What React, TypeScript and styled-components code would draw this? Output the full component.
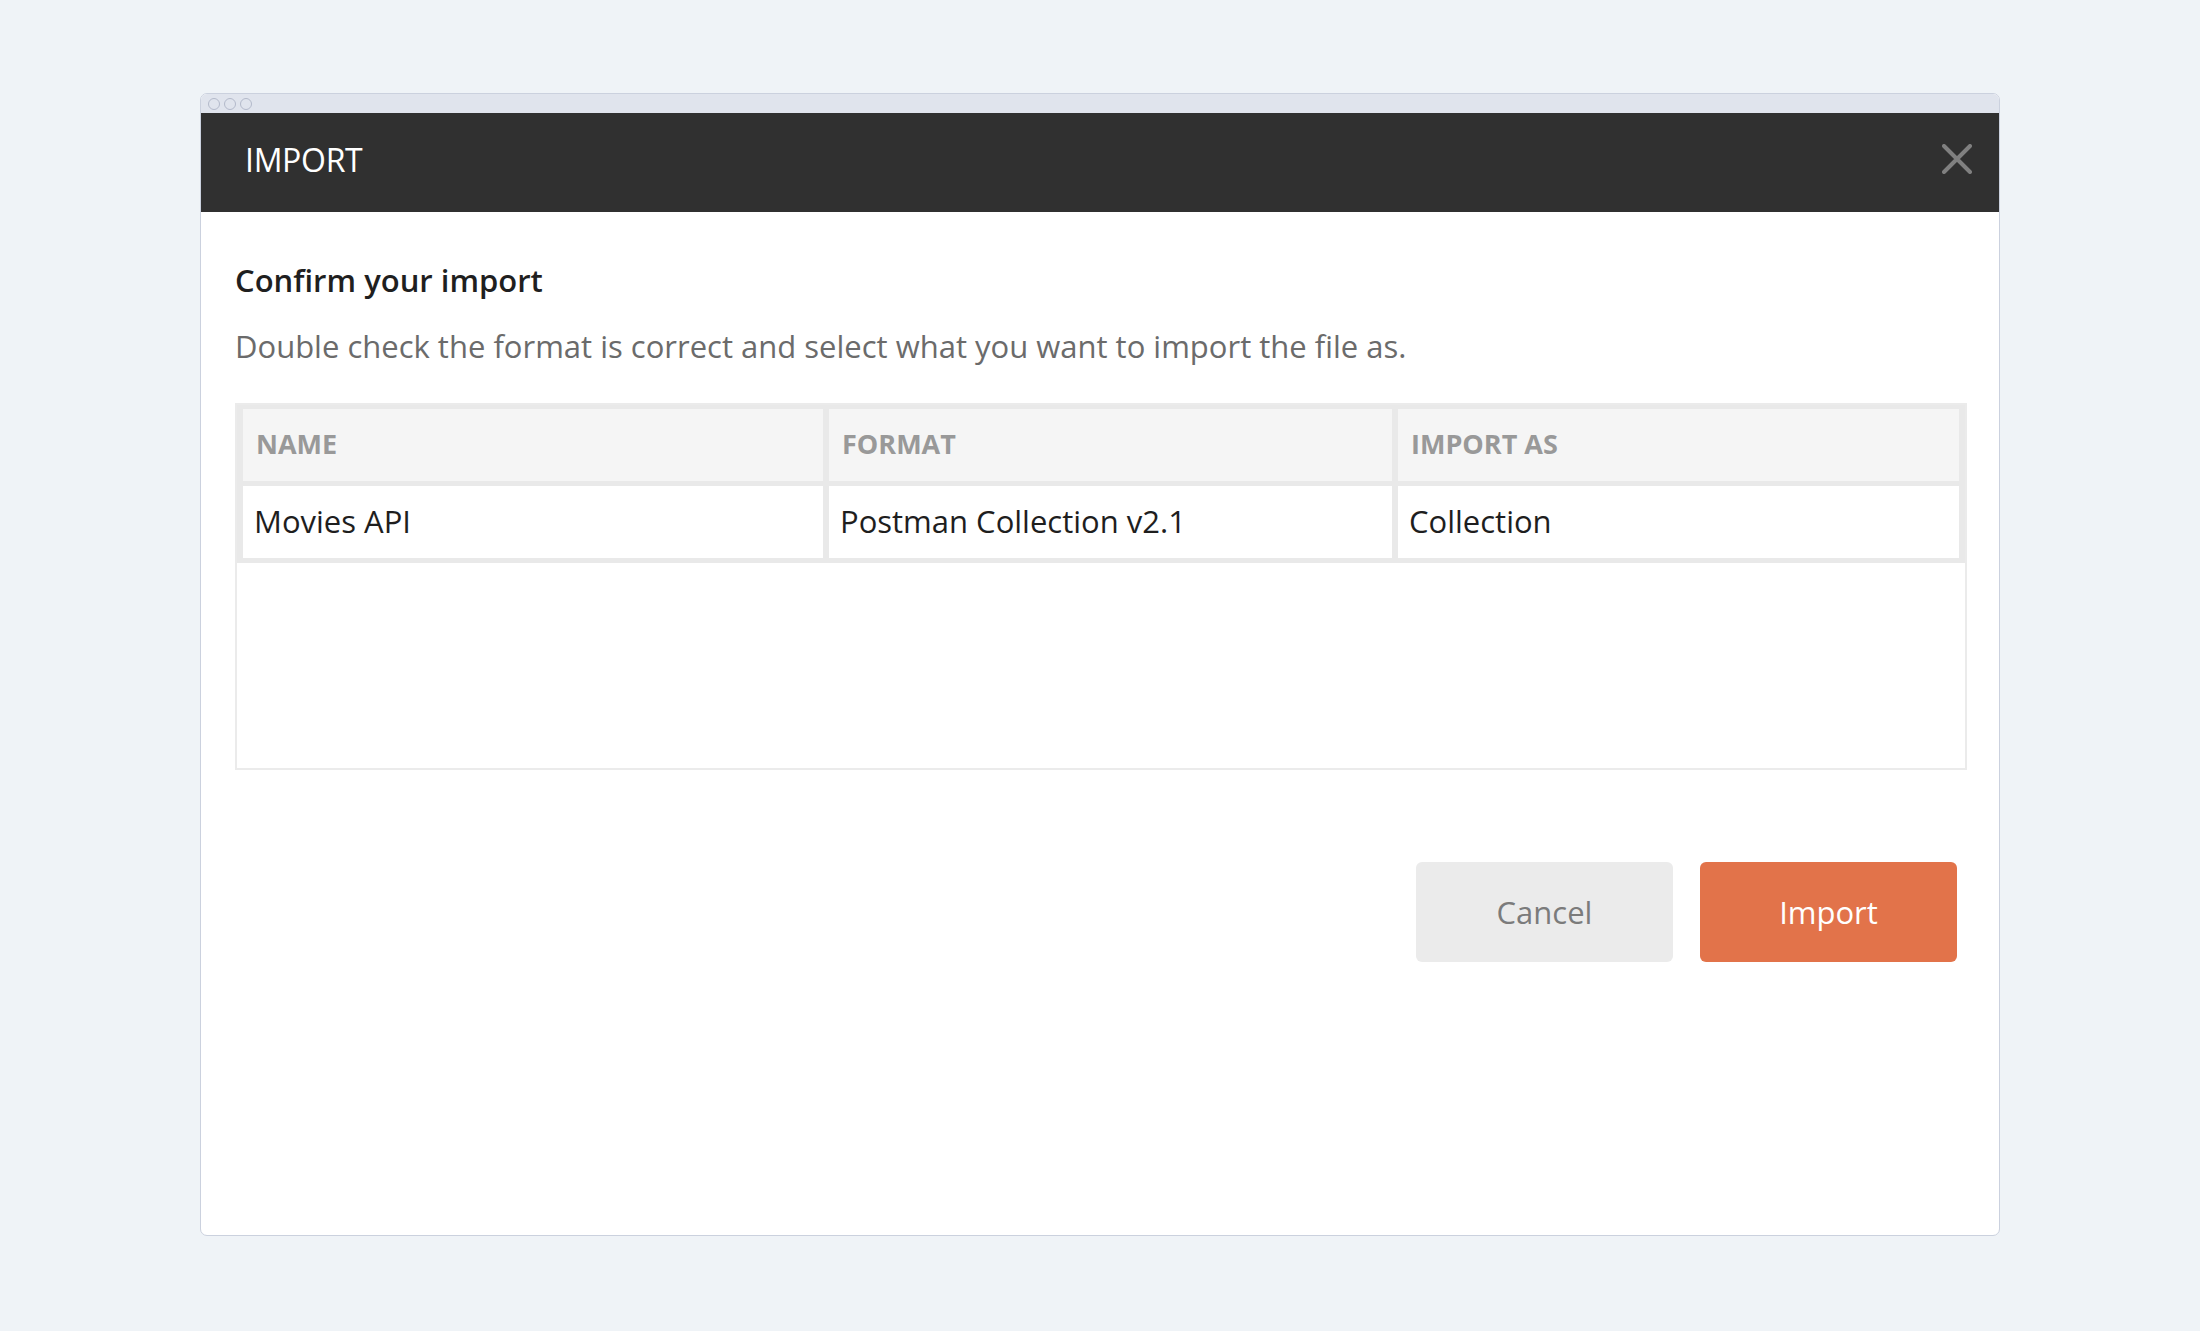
import React from "react";
import styled, { createGlobalStyle } from "styled-components";

const Global = createGlobalStyle`
  html, body { margin: 0; padding: 0; background: #eff3f7; }
  body { font-family: "Open Sans", "Noto Sans", sans-serif; }
`;

const Page = styled.div`
  width: 2200px;
  height: 1331px;
  box-sizing: border-box;
  padding: 93px 0 0 200px;
`;

const Frame = styled.div`
  width: 1800px;
  height: 1143px;
  box-sizing: border-box;
  border: 1px solid #cbd1de;
  border-radius: 7px;
  overflow: hidden;
  background: #ffffff;
  display: flex;
  flex-direction: column;
`;

const TitleBar = styled.div`
  height: 19px;
  flex: none;
  background: #e0e4ed;
  display: flex;
  align-items: center;
  gap: 4px;
  padding-left: 7px;
`;

const Dot = styled.span`
  width: 10px;
  height: 10px;
  border-radius: 50%;
  border: 1px solid #b3b9ca;
`;

const Header = styled.div`
  height: 99px;
  flex: none;
  background: #303030;
  display: flex;
  align-items: center;
  justify-content: space-between;
  padding: 0 27px 7px 44px;
  box-sizing: border-box;
`;

const Title = styled.div`
  color: #ffffff;
  font-size: 32px;
  font-weight: 400;
  letter-spacing: -0.3px;
`;

const CloseBtn = styled.button`
  width: 30px;
  height: 30px;
  padding: 0;
  border: none;
  background: transparent;
  display: flex;
  cursor: pointer;
`;

const Body = styled.div`
  flex: 1;
  padding: 48px 32px 0 34px;
  display: flex;
  flex-direction: column;
`;

const Heading = styled.h2`
  margin: 0;
  font-size: 31px;
  line-height: 40px;
  font-weight: 600;
  color: #1f1f1f;
`;

const Description = styled.p`
  margin: 26px 0 0 0;
  font-size: 31px;
  line-height: 40px;
  color: #6b6b6b;
`;

const TableBox = styled.div`
  margin-top: 37px;
  border: 2px solid #ebebeb;
  height: 367px;
  box-sizing: border-box;
  display: flex;
  flex-direction: column;
`;

const Grid = styled.div`
  display: grid;
  grid-template-columns: 580fr 563fr 561fr;
  grid-auto-rows: 72px;
  column-gap: 6px;
  row-gap: 5px;
  padding: 4px 6px 5px 6px;
  background: #e9e9e9;
`;

const Cell = styled.div<{ $head?: boolean }>`
  background: ${(p) => (p.$head ? "#f5f5f5" : "#ffffff")};
  color: ${(p) => (p.$head ? "#999999" : "#1e1e1e")};
  font-size: ${(p) => (p.$head ? "27px" : "31px")};
  font-weight: ${(p) => (p.$head ? 700 : 400)};
  display: flex;
  align-items: center;
  padding-left: ${(p) => (p.$head ? "13px" : "11px")};
  padding-bottom: 3px;
`;

const Actions = styled.div`
  margin-top: 92px;
  margin-right: 10px;
  display: flex;
  justify-content: flex-end;
  gap: 27px;
`;

const Button = styled.button<{ $primary?: boolean }>`
  width: 257px;
  height: 100px;
  border: none;
  border-radius: 6px;
  font-family: "Open Sans", "Noto Sans", sans-serif;
  font-size: 31px;
  background: ${(p) => (p.$primary ? "#e2734a" : "#ebebeb")};
  color: ${(p) => (p.$primary ? "#ffffff" : "#7b7b7b")};
  cursor: pointer;
`;

const headers = ["NAME", "FORMAT", "IMPORT AS"];
const rows = [["Movies API", "Postman Collection v2.1", "Collection"]];

export default function App() {
  return (
    <>
      <Global />
      <Page>
        <Frame>
          <TitleBar>
            <Dot />
            <Dot />
            <Dot />
          </TitleBar>
          <Header>
            <Title>IMPORT</Title>
            <CloseBtn aria-label="Close">
              <svg width="30" height="30" viewBox="0 0 30 30">
                <path
                  d="M2 2 L28 28 M28 2 L2 28"
                  stroke="#808080"
                  strokeWidth="4"
                  strokeLinecap="round"
                  fill="none"
                />
              </svg>
            </CloseBtn>
          </Header>
          <Body>
            <Heading>Confirm your import</Heading>
            <Description>
              Double check the format is correct and select what you want to import the file as.
            </Description>
            <TableBox>
              <Grid>
                {headers.map((h) => (
                  <Cell key={h} $head>
                    {h}
                  </Cell>
                ))}
                {rows.map((r) =>
                  r.map((c, i) => <Cell key={i}>{c}</Cell>)
                )}
              </Grid>
            </TableBox>
            <Actions>
              <Button>Cancel</Button>
              <Button $primary>Import</Button>
            </Actions>
          </Body>
        </Frame>
      </Page>
    </>
  );
}
